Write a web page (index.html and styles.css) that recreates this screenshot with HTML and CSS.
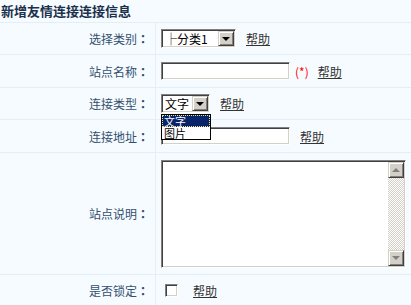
FILE: index.html
```html
<!DOCTYPE html>
<html lang="zh-CN">
<head>
    <meta charset="UTF-8">
    <title>新增友情连接</title>
    <link rel="stylesheet" href="styles.css">
</head>
<body>
    <div class="form-box">
        <div class="form-title">新增友情连接连接信息</div>

        <div class="form-row">
            <div class="form-label">选择类别<span class="colon">：</span></div>
            <div class="form-field">
                <span class="combo combo-class">
                    <span class="combo-text">├分类1</span>
                    <span class="combo-btn"><i class="arrow-down"></i></span>
                </span>
                <a class="help" href="#">帮助</a>
            </div>
        </div>

        <div class="form-row row-input">
            <div class="form-label">站点名称<span class="colon">：</span></div>
            <div class="form-field">
                <span class="text-input"></span>
                <span class="req">(*)</span>
                <a class="help help-req" href="#">帮助</a>
            </div>
        </div>

        <div class="form-row">
            <div class="form-label">连接类型<span class="colon">：</span></div>
            <div class="form-field">
                <span class="combo-wrap">
                    <span class="combo combo-type">
                        <span class="combo-text">文字</span>
                        <span class="combo-btn"><i class="arrow-down"></i></span>
                    </span>
                    <!-- opened list of the select -->
                    <span class="combo-list">
                        <span class="combo-option selected">文字</span>
                        <span class="combo-option">图片</span>
                    </span>
                </span>
                <a class="help" href="#">帮助</a>
            </div>
        </div>

        <div class="form-row row-input">
            <div class="form-label">连接地址<span class="colon">：</span></div>
            <div class="form-field">
                <span class="text-input"></span>
                <a class="help" href="#">帮助</a>
            </div>
        </div>

        <div class="form-row row-memo">
            <div class="form-label">站点说明<span class="colon">：</span></div>
            <div class="form-field">
                <div class="memo">
                    <div class="memo-body"></div>
                    <div class="memo-scroll">
                        <span class="scroll-btn"><i class="arrow-up"></i></span>
                        <span class="scroll-track"></span>
                        <span class="scroll-btn"><i class="arrow-down gray"></i></span>
                    </div>
                </div>
            </div>
        </div>

        <div class="form-row">
            <div class="form-label">是否锁定<span class="colon">：</span></div>
            <div class="form-field">
                <span class="check"></span>
                <a class="help help-check" href="#">帮助</a>
            </div>
        </div>
    </div>
</body>
</html>
```

FILE: styles.css
```css
* {
    margin: 0;
    padding: 0;
    box-sizing: border-box;
}

body {
    background: #f6fbff;
    font-family: "Noto Sans CJK SC", "Liberation Sans", sans-serif;
    font-size: 12px;
    color: #000;
}

.form-box {
    width: 411px;
}

.form-title {
    height: 23px;
    line-height: 22px;
    padding-left: 1px;
    font-size: 13px;
    font-weight: bold;
    color: #1a304c;
    border-bottom: 1px solid #e3eef9;
}

.form-row {
    display: flex;
    height: 32px;
    border-bottom: 1px solid #e3eef9;
}

.row-input {
    height: 33px;
}

.row-memo {
    height: 122px;
}

.form-label {
    width: 156px;
    padding-right: 6px;
    border-right: 1px solid #e3eef9;
    display: flex;
    align-items: center;
    justify-content: flex-end;
    color: #33506e;
}

/* centred full-width colon, as in the old song-ti font */
.colon {
    width: 12px;
    text-align: center;
    font-family: "Noto Sans CJK TC", sans-serif;
    font-weight: bold;
}

.form-field {
    flex: 1;
    padding-left: 5px;
    display: flex;
    align-items: center;
}

/* sunken windows-classic border */
.combo,
.text-input,
.memo,
.check {
    border: 1px solid;
    border-color: #808080 #fff #fff #808080;
    box-shadow: inset 1px 1px #404040, inset -1px -1px #d4d0c8;
    background: #fff;
    padding: 1px;
}

.combo {
    display: inline-flex;
    height: 19px;
}

.combo-class {
    width: 75px;
}

.combo-type {
    width: 49px;
}

.combo-text {
    flex: 1;
    padding-left: 2px;
    line-height: 15px;
    white-space: nowrap;
    overflow: hidden;
}

.combo-btn,
.scroll-btn {
    width: 16px;
    background: #d4d0c8;
    border: 1px solid;
    border-color: #d4d0c8 #404040 #404040 #d4d0c8;
    box-shadow: inset 1px 1px #fff, inset -1px -1px #808080;
    display: flex;
    align-items: center;
    justify-content: center;
}

.arrow-down {
    width: 0;
    height: 0;
    border-left: 4px solid transparent;
    border-right: 4px solid transparent;
    border-top: 4px solid #000;
}

.arrow-up {
    width: 0;
    height: 0;
    border-left: 4px solid transparent;
    border-right: 4px solid transparent;
    border-bottom: 4px solid #808080;
}

.arrow-down.gray {
    border-top-color: #808080;
}

.combo-wrap {
    position: relative;
    display: inline-flex;
}

.combo-list {
    position: absolute;
    top: calc(100% + 1px);
    left: 0;
    width: 50px;
    border: 1px solid #000;
    background: #fff;
    display: flex;
    flex-direction: column;
}

.combo-option {
    height: 12px;
    line-height: 12px;
    font-size: 11px;
    padding-left: 2px;
}

.combo-option.selected {
    background: #0a246a;
    color: #fff;
    outline: 1px dotted #f0e68c;
    outline-offset: -1px;
}

.text-input {
    display: inline-block;
    width: 129px;
    height: 18px;
}

.req {
    margin-left: 5px;
    color: #ff0000;
}

.help {
    margin-left: 10px;
    color: #333;
    text-decoration: underline;
}

.help-req {
    margin-left: 9px;
}

.help-check {
    margin-left: 15px;
}

.memo {
    display: flex;
    width: 245px;
    height: 108px;
}

.memo-body {
    flex: 1;
}

.memo-scroll {
    width: 16px;
    display: flex;
    flex-direction: column;
}

.scroll-btn {
    height: 16px;
}

.scroll-track {
    flex: 1;
    background: repeating-conic-gradient(#d4d0c8 0 25%, #fff 0 50%) 0 0 / 2px 2px;
}

.check {
    display: inline-block;
    width: 13px;
    height: 13px;
    margin-left: 4px;
}
```
